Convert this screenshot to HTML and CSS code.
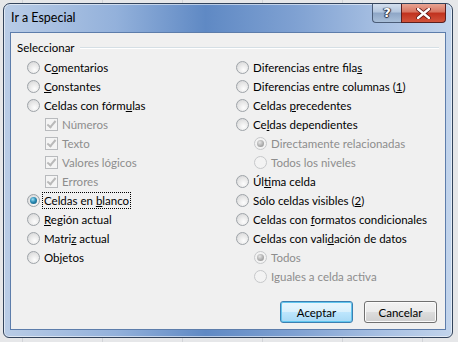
FILE: index.html
```html
<!DOCTYPE html>
<html lang="es">
<head>
  <meta charset="UTF-8" />
  <title>Ir a Especial</title>
  <link rel="stylesheet" href="styles.css">
</head>
<body>
  <div class="window">
    <div class="titlebar">
      <span class="title">Ir a Especial</span>
      <div class="caption-buttons">
        <div class="btn-help">?</div>
        <div class="btn-close">
          <svg width="15" height="11" viewBox="0 0 15 11">
            <path d="M2 1 L13 10 M13 1 L2 10" stroke="#5a1010" stroke-width="4" stroke-linecap="round"/>
            <path d="M2 1 L13 10 M13 1 L2 10" stroke="#fff" stroke-width="2.4" stroke-linecap="round"/>
          </svg>
        </div>
      </div>
    </div>

    <div class="client">
      <div class="group">
        <div class="group-head"><span>Seleccionar</span><i></i></div>

        <div class="columns">
          <div class="col">
            <div class="opt"><span class="radio"></span><span>C<u>o</u>mentarios</span></div>
            <div class="opt"><span class="radio"></span><span><u>C</u>onstantes</span></div>
            <div class="opt"><span class="radio"></span><span>Celdas con fórm<u>u</u>las</span></div>
            <div class="opt sub off"><span class="check"></span><span>Números</span></div>
            <div class="opt sub off"><span class="check"></span><span>Texto</span></div>
            <div class="opt sub off"><span class="check"></span><span>Valores lógicos</span></div>
            <div class="opt sub off"><span class="check"></span><span>Errores</span></div>
            <div class="opt"><span class="radio on"></span><span class="focus">Celdas en <u>b</u>lanco</span></div>
            <div class="opt"><span class="radio"></span><span><u>R</u>egión actual</span></div>
            <div class="opt"><span class="radio"></span><span>Matri<u>z</u> actual</span></div>
            <div class="opt"><span class="radio"></span><span>Ob<u>j</u>etos</span></div>
          </div>

          <div class="col">
            <div class="opt"><span class="radio"></span><span>Diferencias entre fila<u>s</u></span></div>
            <div class="opt"><span class="radio"></span><span>Diferencias entre columnas (<u>1</u>)</span></div>
            <div class="opt"><span class="radio"></span><span>Celdas <u>p</u>recedentes</span></div>
            <div class="opt"><span class="radio"></span><span>Ce<u>l</u>das dependientes</span></div>
            <div class="opt sub off"><span class="radio dim"></span><span>Directamente relacionadas</span></div>
            <div class="opt sub off"><span class="radio"></span><span>Todos los niveles</span></div>
            <div class="opt"><span class="radio"></span><span>Úl<u>t</u>ima celda</span></div>
            <div class="opt"><span class="radio"></span><span>Sólo celdas visibles (<u>2</u>)</span></div>
            <div class="opt"><span class="radio"></span><span>Celdas con <u>f</u>ormatos condicionales</span></div>
            <div class="opt"><span class="radio"></span><span>Celdas con vali<u>d</u>ación de datos</span></div>
            <div class="opt sub off"><span class="radio dim"></span><span>Todos</span></div>
            <div class="opt sub off"><span class="radio"></span><span>Iguales a celda activa</span></div>
          </div>
        </div>
      </div>

      <div class="actions">
        <button class="button default">Aceptar</button>
        <button class="button">Cancelar</button>
      </div>
    </div>
  </div>
</body>
</html>
```

FILE: styles.css
```css
body {
  margin: 0;
  width: 458px;
  height: 342px;
  overflow: hidden;
  font-family: Lato, 'Noto Sans', sans-serif;
  font-size: 11.5px;
  color: #000;
  background-color: #e6e7e9;
  background-image: linear-gradient(90deg, #d2d4d8 1px, transparent 1px);
  background-size: 80px 100%;
  background-position: 22px 0;
}

.window {
  margin: 3px;
  width: 450px;
  height: 335px;
  box-sizing: border-box;
  border: 1px solid #33445c;
  border-radius: 7px 7px 6px 6px;
  background: linear-gradient(90deg, #b9cce6 0%, #93b1db 25%, #5f89c4 45%, #7fa1d2 65%, #a9c1e3 85%, #c2d4ec 100%);
  box-shadow: inset 0 0 0 1px rgba(255,255,255,0.55);
  display: flex;
  flex-direction: column;
}

.titlebar {
  height: 27px;
  display: flex;
  justify-content: space-between;
  padding-left: 7px;
}

.title {
  font-size: 12.5px;
  line-height: 27px;
  color: #000;
}

.caption-buttons {
  display: flex;
  margin-right: 6px;
  height: 19px;
}

.btn-help {
  width: 29px;
  box-sizing: border-box;
  border: 1px solid #4b5d78;
  border-top: none;
  border-right: none;
  border-radius: 0 0 0 4px;
  background: linear-gradient(#d3dfee 0%, #b3c6de 45%, #8ea6c6 50%, #a9bfd9 100%);
  color: #fff;
  font-family: 'DejaVu Sans', sans-serif;
  font-weight: bold;
  font-size: 13px;
  line-height: 18px;
  text-align: center;
  text-shadow: 0 0 1px #223, 1px 0 1px #334, -1px 0 1px #334, 0 1px 1px #334;
}

.btn-close {
  width: 45px;
  box-sizing: border-box;
  border: 1px solid #5a1f1f;
  border-top: none;
  border-radius: 0 0 4px 0;
  background: linear-gradient(#e8a493 0%, #d7735f 45%, #c0311e 50%, #d2533b 100%);
  display: flex;
  align-items: center;
  justify-content: center;
}

.client {
  flex: 1;
  margin: 1px 6px 7px 6px;
  border: 1px solid #5d7dab;
  background: #f0f0f0;
  display: flex;
  flex-direction: column;
  padding: 7px 6px 6px 6px;
}

.group {
  flex: 1;
}

.group-head {
  display: flex;
  align-items: center;
  height: 15px;
}

.group-head i {
  flex: 1;
  margin-left: 5px;
  border-top: 1px solid #d5dfe5;
  border-bottom: 1px solid #fff;
}

.columns {
  display: grid;
  grid-template-columns: 209px 1fr;
  padding-top: 3px;
  padding-left: 10px;
}

.opt {
  height: 19px;
  display: flex;
  align-items: center;
  white-space: nowrap;
}

.opt.sub {
  padding-left: 18px;
}

.opt.off {
  color: #8d8d8d;
}

.radio {
  width: 11px;
  height: 11px;
  border: 1px solid #9ea3a8;
  border-radius: 50%;
  background: radial-gradient(circle at 60% 70%, #fdfdfd 0%, #e6e6e6 55%, #cfd0d2 100%);
  margin-right: 4px;
  flex: none;
  position: relative;
}

.radio.on::after,
.radio.dim::after {
  content: "";
  position: absolute;
  left: 2px;
  top: 2px;
  width: 7px;
  height: 7px;
  border-radius: 50%;
  background: radial-gradient(circle at 40% 35%, #9fe0f5 0%, #2a8bb4 45%, #0c4f70 100%);
}

.radio.dim::after {
  background: radial-gradient(circle at 40% 35%, #e6e6e6 0%, #a9a9a9 60%, #8c8c8c 100%);
}

.opt.off .radio {
  border-color: #c6c8ca;
  background: #f3f3f3;
}

.check {
  width: 11px;
  height: 11px;
  border: 1px solid #b8babd;
  background: #f4f4f4;
  margin-right: 4px;
  flex: none;
  position: relative;
}

.check::after {
  content: "";
  position: absolute;
  left: 3px;
  top: 0px;
  width: 3px;
  height: 7px;
  border: solid #b9b9b9;
  border-width: 0 2px 2px 0;
  transform: rotate(40deg);
}

.focus {
  outline: 1px dotted #000;
  padding: 0 1px;
  margin-left: -1px;
  line-height: 15px;
}

.actions {
  display: flex;
  justify-content: flex-end;
  gap: 11px;
  padding-right: 2px;
}

.button {
  width: 73px;
  height: 22px;
  font-family: inherit;
  font-size: 11.5px;
  color: #000;
  border: 1px solid #707070;
  border-radius: 3px;
  background: linear-gradient(#f2f2f2 0%, #ebebeb 50%, #dddddd 51%, #cfcfcf 100%);
  box-shadow: inset 0 0 0 1px #fbfbfb;
  padding: 0;
}

.button.default {
  border-color: #3c7fb1;
  background: linear-gradient(#eaf6fd 0%, #d9f0fc 50%, #bee6fd 51%, #a7d9f5 100%);
  box-shadow: inset 0 0 0 1px #62c6ee;
}
```
